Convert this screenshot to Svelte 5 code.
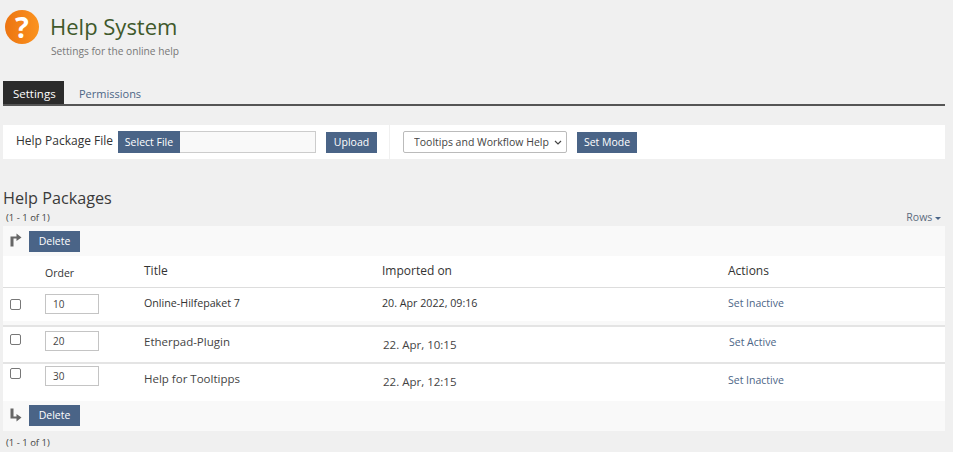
<script>
  let mode = $state("Tooltips and Workflow Help");

  const packages = [
    { id: 1, order: 10, title: "Online-Hilfepaket 7", imported: "20. Apr 2022, 09:16", action: "Set Inactive" },
    { id: 2, order: 20, title: "Etherpad-Plugin", imported: "22. Apr, 10:15", action: "Set Active" },
    { id: 3, order: 30, title: "Help for Tooltipps", imported: "22. Apr, 12:15", action: "Set Inactive" },
  ];
</script>

<main>
  <header class="page-head">
    <div class="help-icon">?</div>
    <div>
      <h1>Help System</h1>
      <p class="subtitle">Settings for the online help</p>
    </div>
  </header>

  <nav class="tabs">
    <span class="tab active">Settings</span>
    <span class="tab">Permissions</span>
  </nav>

  <section class="toolbar">
    <div class="upload">
      <span class="file-label">Help Package File</span>
      <div class="file-input">
        <button class="btn select-file">Select File</button>
        <span class="file-name"></span>
      </div>
      <button class="btn upload-btn">Upload</button>
    </div>
    <div class="mode">
      <select bind:value={mode}>
        <option>Tooltips and Workflow Help</option>
        <option>Tooltips only</option>
        <option>Workflow Help only</option>
      </select>
      <button class="btn mode-btn">Set Mode</button>
    </div>
  </section>

  <h2>Help Packages</h2>
  <div class="list-meta">
    <span class="count">(1 - 1 of 1)</span>
    <span class="rows">Rows <i class="caret"></i></span>
  </div>

  <div class="table">
    <div class="cmd top">
      <svg width="12" height="14" viewBox="0 0 12 14">
        <path d="M0.5 13.5V3.5H6.5V0.5L11.5 4.5L6.5 8V5.5H3.5V13.5Z" fill="#666" />
      </svg>
      <button class="btn">Delete</button>
    </div>
    <div class="row head">
      <span></span>
      <span class="order-head">Order</span>
      <span>Title</span>
      <span>Imported on</span>
      <span>Actions</span>
    </div>
    {#each packages as pkg (pkg.id)}
      <div class="row item item-{pkg.id}">
        <span class="check"><input type="checkbox" /></span>
        <span class="order"><input type="text" value={pkg.order} /></span>
        <span class="title">{pkg.title}</span>
        <span class="date">{pkg.imported}</span>
        <a href="#top" class="action">{pkg.action}</a>
      </div>
    {/each}
    <div class="cmd bottom">
      <svg width="12" height="14" viewBox="0 0 12 14">
        <path d="M0.5 0.5H3.5V8.5H6.5V6L11.5 9.5L6.5 13.5V10.5H0.5Z" fill="#666" />
      </svg>
      <button class="btn">Delete</button>
    </div>
  </div>
  <div class="count foot">(1 - 1 of 1)</div>
</main>

<style>
  :global(body) {
    background: #f0f0f0;
    overflow: hidden;
  }

  main {
    font-family: "Open Sans", sans-serif;
    font-size: 11px;
    color: #444;
    height: 452px;
    padding: 0 8px 0 3px;
    box-sizing: border-box;
    overflow: hidden;
  }

  .page-head {
    display: flex;
    gap: 12px;
    padding: 10px 0 0 2px;
    height: 81px;
    box-sizing: border-box;
  }

  .help-icon {
    width: 34px;
    height: 34px;
    border-radius: 50%;
    background: linear-gradient(90deg, #ec7411, #fb931f);
    color: #fff;
    font-weight: 700;
    font-size: 29px;
    line-height: 34px;
    text-align: center;
  }

  h1 {
    margin: 0 0 0 -1px;
    font-size: 22px;
    font-weight: 400;
    line-height: 32px;
    color: #40592b;
  }

  .subtitle {
    margin: 0;
    font-size: 10.2px;
    line-height: 16px;
    color: #777;
    padding-top: 1px;
  }

  .tabs {
    display: flex;
    height: 23px;
    border-bottom: 2px solid #555;
  }

  .tab {
    padding: 0 14px 0 15px;
    line-height: 26px;
    font-size: 11px;
    color: #4c6586;
  }

  .tab.active {
    background: #2b2b2b;
    color: #fff;
    padding: 0 10px;
    width: 41px;
    font-size: 11.5px;
  }

  .toolbar {
    display: flex;
    align-items: stretch;
    background: #fff;
    height: 34px;
    margin-top: 19px;
  }

  .upload {
    display: flex;
    align-items: center;
    width: 387px;
    padding-left: 13px;
    box-sizing: border-box;
    border-right: 1px solid #f0f0f0;
  }

  .file-label {
    width: 102px;
    font-size: 12px;
    color: #333;
    margin-top: -3px;
  }

  .file-input {
    display: flex;
    width: 198px;
    height: 22px;
    margin-right: 10px;
  }

  .file-name {
    flex: 1;
    background: #f9f9f9;
    border: 1px solid #ccc;
    border-left: none;
  }

  .btn {
    width: 51px;
    height: 21px;
    padding: 0;
    border: none;
    background: #4a6487;
    color: #fff;
    font-family: inherit;
    font-size: 10.5px;
    white-space: nowrap;
  }

  .select-file {
    width: 62px;
    height: 22px;
    flex: none;
  }

  .mode-btn {
    width: 60px;
  }

  .mode {
    display: flex;
    align-items: center;
    padding-left: 13px;
    gap: 10px;
  }

  select {
    appearance: none;
    width: 164px;
    height: 22px;
    background: #fff url("data:image/svg+xml,%3Csvg xmlns='http://www.w3.org/2000/svg' width='8' height='5'%3E%3Cpath d='M1 1l3 3 3-3' fill='none' stroke='%23444' stroke-width='1.2'/%3E%3C/svg%3E") no-repeat right 4px center;
    border: 1px solid #bbb;
    border-radius: 2px;
    color: #444;
    font-family: inherit;
    font-size: 10.5px;
    padding-left: 10px;
  }

  h2 {
    margin: 29px 0 0;
    font-size: 16.2px;
    font-weight: 400;
    line-height: 20px;
    color: #3a3a3a;
  }

  .list-meta {
    display: flex;
    justify-content: space-between;
    align-items: center;
    height: 16px;
    margin: 1px 0 1px;
    padding: 0 4px 0 3px;
  }

  .count {
    font-size: 9.5px;
    color: #444;
  }

  .rows {
    font-size: 10.5px;
    color: #5c6b7e;
  }

  .caret {
    display: inline-block;
    border: 3.5px solid transparent;
    border-top: 3.5px solid #4a6487;
    border-bottom: none;
    vertical-align: middle;
  }

  .table {
    background: #fff;
  }

  .cmd {
    display: flex;
    align-items: center;
    gap: 7px;
    background: #f9f9f9;
    height: 30px;
    padding-left: 7px;
  }

  .cmd svg {
    margin-top: -3px;
  }

  .bottom .btn {
    margin-top: -2px;
  }

  .row {
    display: grid;
    grid-template-columns: 42px 99px 238px 346px 1fr;
    align-items: center;
  }

  .head {
    height: 31px;
    font-size: 12px;
    color: #333;
    border-bottom: 1px solid #ddd;
  }

  .head span {
    margin-top: -2px;
  }

  .head .order-head {
    font-size: 10.5px;
    margin-top: 2px;
  }

  .item {
    font-size: 11.5px;
  }

  .item-1 {
    height: 33px;
    font-size: 10.7px;
    box-shadow: 0 4px 0 #f9f9f9;
    margin-bottom: 4px;
  }

  .item-2 {
    height: 35px;
    border-top: 2px solid #e4e4e4;
  }

  .item-3 {
    height: 37px;
    border-top: 2px solid #e4e4e4;
  }

  .check {
    display: flex;
    padding-left: 7px;
  }

  .check input {
    width: 11px;
    height: 11px;
    margin: 0;
    appearance: none;
    background: #fff;
    border: 1px solid #777;
    border-radius: 2px;
  }

  .order input {
    display: block;
    width: 54px;
    height: 20px;
    padding: 0 0 0 7px;
    box-sizing: border-box;
    border: 1px solid #c4c4c4;
    background: #fff;
    font-family: inherit;
    font-size: 10px;
    color: #444;
  }

  .action {
    font-size: 10.5px;
    color: #4c6586;
    text-decoration: none;
  }

  .item-1 .date,
  .item-1 .title {
    color: #333;
  }

  .item-1 .title,
  .item-1 .date,
  .item-1 .action {
    margin-top: -4px;
  }

  .item-1 .order {
    margin-top: -2px;
  }

  .item-2 .title {
    margin-top: -7px;
  }

  .item-2 .date {
    padding-left: 1px;
    margin-top: -1px;
  }

  .item-2 .action {
    padding-left: 1px;
    margin-top: -6px;
  }

  .item-2 .check {
    margin-top: -10px;
  }

  .item-2 .order {
    margin-top: -8px;
  }

  .item-3 .title {
    margin-top: -8px;
  }

  .item-3 .date {
    padding-left: 1px;
    margin-top: -3px;
  }

  .item-3 .action {
    margin-top: -6px;
  }

  .item-3 .check {
    margin-top: -18px;
  }

  .item-3 .order {
    margin-top: -13px;
  }

  .foot {
    margin: 5px 0 0 3px;
  }
</style>
